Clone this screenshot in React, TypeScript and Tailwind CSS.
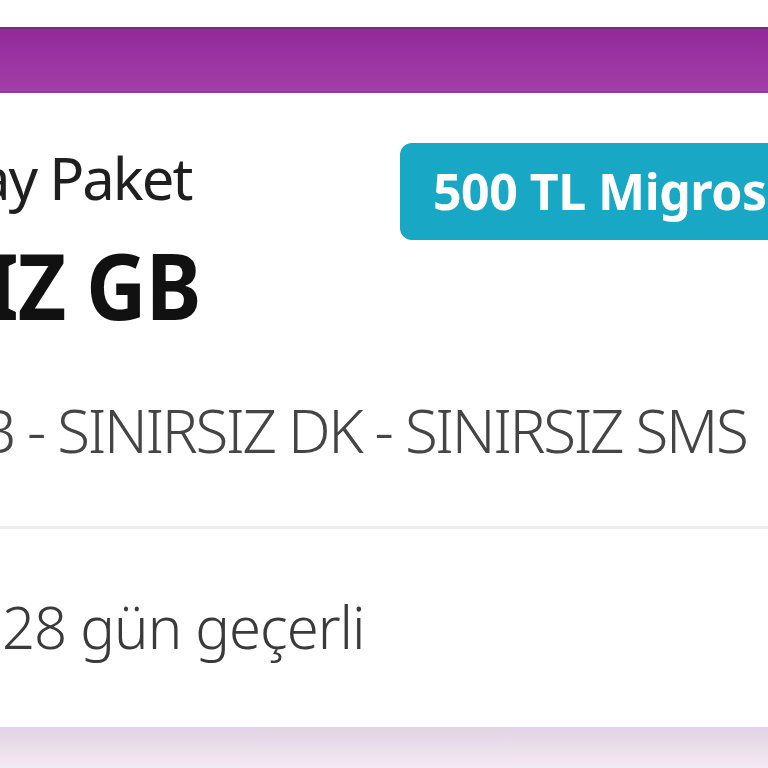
import React from "react";

export default function App() {
  return (
    <div
      className="w-[768px] h-[768px] overflow-hidden bg-white flex flex-col"
      style={{ fontFamily: '"Noto Sans", "Open Sans", sans-serif' }}
    >
      <div className="h-[27px] bg-white shrink-0" />
      <div className="h-[66px] shrink-0 bg-gradient-to-b from-[#93289a] to-[#a33fa8] border-t-2 border-b-2 border-t-[#7a2a82] border-b-[#80468a]" />
      <div className="flex-1 flex flex-col bg-white">
        <div className="flex flex-row justify-between pt-[50px]">
          <div className="flex flex-col">
            <div className="text-[58px] leading-[70px] text-[#1f1f1f] ml-[-22px] tracking-[-2px] whitespace-nowrap">ay Paket</div>
            <div className="text-[91px] leading-[100px] font-bold text-[#111] ml-[-14px] mt-[22px] tracking-[-1px] whitespace-nowrap scale-x-[0.92] origin-left">IZ GB</div>
          </div>
          <div className="h-[97px] w-[400px] mr-[-32px] rounded-[12px] bg-[#18a7c4] flex items-center pl-[33px]">
            <span className="text-[50px] font-bold text-white tracking-[-0.5px] whitespace-nowrap">500 TL Migros</span>
          </div>
        </div>
        <div className="text-[60px] leading-[70px] font-light text-[#454545] ml-[-22px] mt-[60px] whitespace-nowrap tracking-[-2.3px]">B - SINIRSIZ DK - SINIRSIZ SMS</div>
        <div className="h-[3px] bg-[#ededed] mt-[61px] shrink-0" />
        <div className="text-[58px] leading-[70px] font-light text-[#3a3a3a] ml-[2px] mt-[63px] tracking-[-1px] whitespace-nowrap">28 gün geçerli</div>
        <div className="flex-1" />
        <div className="h-[41px] shrink-0 bg-gradient-to-b from-[#e2d2e3] to-[#f4eaf4]" />
      </div>
    </div>
  );
}
